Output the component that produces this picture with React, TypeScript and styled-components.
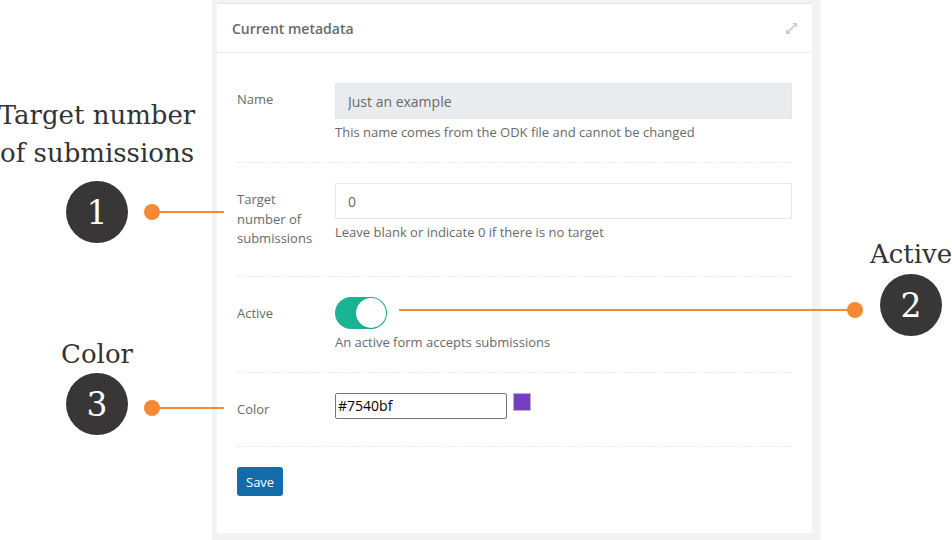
import React from "react";
import styled, { createGlobalStyle } from "styled-components";

const GlobalStyle = createGlobalStyle`
  html, body { margin: 0; padding: 0; background: #ffffff; }
  body { font-family: "Open Sans", "Liberation Sans", sans-serif; }
  * { box-sizing: border-box; }
`;

const Stage = styled.div`
  position: relative;
  width: 952px;
  height: 540px;
  overflow: hidden;
  display: flex;
`;

const Column = styled.div`
  margin-left: 212px;
  width: 609px;
  height: 540px;
  background: #f3f3f4;
  padding: 3px 9px 7px 5px;
  display: flex;
  flex-direction: column;
`;

const Panel = styled.section`
  flex: 1;
  background: #ffffff;
  border-top: 1px solid #e4e6e9;
  display: flex;
  flex-direction: column;
`;

const PanelHeader = styled.header`
  height: 49px;
  padding: 0 14px 0 15px;
  border-bottom: 1px solid #e7eaec;
  display: flex;
  align-items: center;
  justify-content: space-between;
`;

const PanelTitle = styled.h5`
  margin: 0;
  font-size: 14px;
  font-weight: 600;
  color: #676a6c;
`;

const PanelBody = styled.div`
  padding: 10px 20px 0 20px;
  display: flex;
  flex-direction: column;
`;

const Row = styled.div`
  display: grid;
  grid-template-columns: 98px 1fr;
  padding: 20px 0 21px;
  border-bottom: 1px dashed #e7eaec;
`;

const Label = styled.label`
  padding: 7px 15px 6px 0;
  font-size: 13px;
  line-height: 19.5px;
  color: #676a6c;
`;

const Field = styled.div`
  display: flex;
  flex-direction: column;
  align-items: flex-start;
`;

const TextInput = styled.input<{ $disabled?: boolean }>`
  width: 100%;
  height: 36px;
  padding: 6px 12px;
  border: 1px solid #e5e6e7;
  border-radius: 1px;
  background: ${(p) => (p.$disabled ? "#e9ecef" : "#ffffff")};
  color: #676a6c;
  font-family: "Open Sans", sans-serif;
  font-size: 14px;
  outline: none;
`;

const Help = styled.span`
  margin-top: 4px;
  font-size: 13px;
  line-height: 18px;
  color: #676a6c;
`;

const Toggle = styled.span`
  position: relative;
  display: inline-block;
  width: 52px;
  height: 32px;
  border-radius: 16px;
  background: #1ab394;
`;

const Knob = styled.span`
  position: absolute;
  top: 1px;
  right: 1px;
  width: 30px;
  height: 30px;
  border-radius: 50%;
  background: #ffffff;
  box-shadow: 0 1px 2px rgba(0, 0, 0, 0.15);
`;

const ColorLine = styled.div`
  display: flex;
  align-items: flex-start;
  gap: 6px;
`;

const ColorInput = styled.input`
  width: 172px;
  height: 26px;
  padding: 1px 2px;
  border: 1px solid #767676;
  border-radius: 2px;
  font-family: "Open Sans", sans-serif;
  font-size: 14px;
  color: #000000;
  background: #ffffff;
  outline: none;
`;

const Swatch = styled.span<{ $color: string }>`
  width: 18px;
  height: 18px;
  background: ${(p) => p.$color};
  border: 1px solid #b9b3c4;
`;

const Actions = styled.div`
  padding-top: 20px;
`;

const SaveButton = styled.button`
  height: 29px;
  padding: 0 9px;
  border: none;
  border-radius: 3px;
  background: #136ca9;
  color: #ffffff;
  font-family: "Open Sans", sans-serif;
  font-size: 13px;
`;

/* ---------- annotation callouts (overlay) ---------- */

const Callout = styled.div<{ $cx: number; $top: number; $gap: number }>`
  position: absolute;
  left: ${(p) => p.$cx - 110}px;
  top: ${(p) => p.$top}px;
  width: 220px;
  display: flex;
  flex-direction: column;
  align-items: center;
  gap: ${(p) => p.$gap}px;
`;

const CalloutText = styled.div`
  font-family: "DejaVu Serif", "Liberation Serif", serif;
  font-size: 26px;
  line-height: 38px;
  color: #333333;
  text-align: center;
  white-space: nowrap;
`;

const Badge = styled.div`
  width: 62px;
  height: 62px;
  border-radius: 50%;
  background: #383636;
  color: #ffffff;
  display: flex;
  align-items: center;
  justify-content: center;
  font-family: "DejaVu Serif", "Liberation Serif", serif;
  font-size: 33px;
`;

const Leader = styled.div<{ $x1: number; $x2: number; $y: number }>`
  position: absolute;
  left: ${(p) => p.$x1}px;
  top: ${(p) => p.$y - 1}px;
  width: ${(p) => p.$x2 - p.$x1}px;
  height: 2px;
  background: #f58a33;
`;

const Dot = styled.div<{ $cx: number; $cy: number }>`
  position: absolute;
  left: ${(p) => p.$cx - 8}px;
  top: ${(p) => p.$cy - 8}px;
  width: 16px;
  height: 16px;
  border-radius: 50%;
  background: #f58a33;
`;

const ExpandIcon = () => (
  <svg width="13" height="13" viewBox="0 0 13 13" fill="#c8c8c8">
    <path d="M1.5 11.5 L11.5 1.5" stroke="#c8c8c8" strokeWidth="1.6" />
    <polygon points="7.5,1 12,1 12,5.5" />
    <polygon points="1,7.5 1,12 5.5,12" />
  </svg>
);

export default function App() {
  return (
    <>
      <GlobalStyle />
      <Stage>
        <Column>
          <Panel>
            <PanelHeader>
              <PanelTitle>Current metadata</PanelTitle>
              <ExpandIcon />
            </PanelHeader>
            <PanelBody>
              <Row>
                <Label>Name</Label>
                <Field>
                  <TextInput $disabled readOnly value="Just an example" />
                  <Help>This name comes from the ODK file and cannot be changed</Help>
                </Field>
              </Row>
              <Row>
                <Label>Target number of submissions</Label>
                <Field>
                  <TextInput readOnly value="0" />
                  <Help>Leave blank or indicate 0 if there is no target</Help>
                </Field>
              </Row>
              <Row>
                <Label>Active</Label>
                <Field>
                  <Toggle>
                    <Knob />
                  </Toggle>
                  <Help>An active form accepts submissions</Help>
                </Field>
              </Row>
              <Row>
                <Label>Color</Label>
                <Field>
                  <ColorLine>
                    <ColorInput readOnly value="#7540bf" />
                    <Swatch $color="#7540bf" />
                  </ColorLine>
                </Field>
              </Row>
              <Actions>
                <SaveButton>Save</SaveButton>
              </Actions>
            </PanelBody>
          </Panel>
        </Column>

        <Callout $cx={97} $top={96} $gap={9}>
          <CalloutText>
            Target number
            <br />
            of submissions
          </CalloutText>
          <Badge>1</Badge>
        </Callout>
        <Leader $x1={152} $x2={224} $y={212} />
        <Dot $cx={152} $cy={212} />

        <Callout $cx={911} $top={235} $gap={1}>
          <CalloutText>Active</CalloutText>
          <Badge>2</Badge>
        </Callout>
        <Leader $x1={399} $x2={855} $y={310} />
        <Dot $cx={855} $cy={310} />

        <Callout $cx={97} $top={335} $gap={0}>
          <CalloutText>Color</CalloutText>
          <Badge>3</Badge>
        </Callout>
        <Leader $x1={152} $x2={224} $y={408} />
        <Dot $cx={152} $cy={408} />
      </Stage>
    </>
  );
}
